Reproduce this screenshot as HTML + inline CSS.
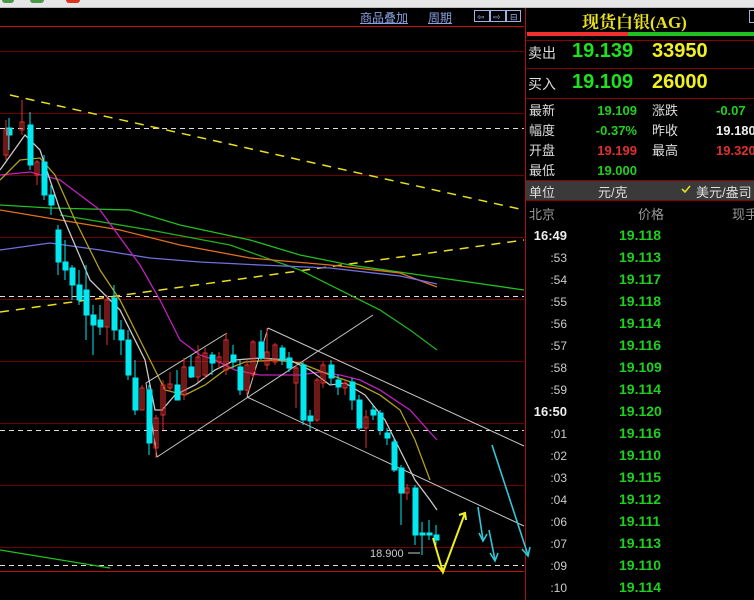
<!DOCTYPE html>
<html><head><meta charset="utf-8"><style>
body{margin:0;width:754px;height:600px;background:#000;overflow:hidden;position:relative;font-family:"Liberation Sans","Noto Sans CJK SC",sans-serif}
.t{position:absolute;white-space:nowrap}
</style></head><body>
<div style="position:absolute;left:0;top:0;width:754px;height:7px;background:#e6e6e6;border-bottom:1px solid #bbb"></div>
<div style="position:absolute;left:2px;top:0;width:12px;height:3px;background:#4a9a4a;border-radius:0 0 3px 3px"></div>
<div style="position:absolute;left:30px;top:0;width:14px;height:3px;background:#4a9a4a;border-radius:0 0 3px 3px"></div>
<div style="position:absolute;left:66px;top:0;width:14px;height:3px;background:#e03020;border-radius:0 0 3px 3px"></div>
<svg width="754" height="600" style="position:absolute;left:0;top:0" xmlns="http://www.w3.org/2000/svg">
<g stroke="#700000" stroke-width="1">
<line x1="0" y1="26.5" x2="524" y2="26.5" stroke="#c01010"/>
<line x1="0" y1="51.5" x2="524" y2="51.5"/><line x1="0" y1="113.5" x2="524" y2="113.5"/><line x1="0" y1="175.5" x2="524" y2="175.5"/><line x1="0" y1="237.5" x2="524" y2="237.5"/><line x1="0" y1="299.5" x2="524" y2="299.5"/><line x1="0" y1="361.5" x2="524" y2="361.5"/><line x1="0" y1="423.5" x2="524" y2="423.5"/><line x1="0" y1="485.5" x2="524" y2="485.5"/><line x1="0" y1="547.5" x2="524" y2="547.5"/><line x1="0" y1="571.5" x2="524" y2="571.5" stroke="#c01010"/>
</g>
<g stroke="#ddd" stroke-dasharray="5,4"><line x1="0" y1="128.5" x2="524" y2="128.5"/><line x1="0" y1="296.5" x2="524" y2="296.5"/><line x1="0" y1="430.5" x2="524" y2="430.5"/><line x1="0" y1="565.5" x2="524" y2="565.5"/></g>
<line x1="525.5" y1="8" x2="525.5" y2="600" stroke="#b01010"/>
<g stroke="#e8e020" stroke-width="1.5" stroke-dasharray="9,7"><line x1="10" y1="95" x2="524" y2="210"/><line x1="0" y1="312" x2="524" y2="240"/></g>
<g fill="none" stroke-width="1.3">
<polyline stroke="#20c020" points="0,205 50,208 130,210 180,225 250,240 300,255 350,265 420,275 524,290"/>
<polyline stroke="#20b020" points="60,215 150,230 230,245 300,270 340,290 380,310 410,330 437,350"/>
<polyline stroke="#e07020" points="0,210 60,220 120,230 180,245 250,258 330,265 400,273 437,287"/>
<polyline stroke="#7070e0" points="0,250 50,243 100,250 150,258 200,262 260,265 330,268 400,276 437,284"/>
<polyline stroke="#c020c0" points="0,175 30,172 60,180 100,210 140,265 160,300 180,340 200,355 215,360 235,370 260,375 300,375 320,372 340,375 360,380 380,390 410,410 437,440"/>
<polyline stroke="#b0a020" points="0,180 20,160 40,158 55,175 75,220 100,270 120,300 135,330 150,360 165,390 185,395 205,385 225,370 245,362 275,360 300,363 330,375 360,385 380,395 400,410 415,440 430,480"/>
<polyline stroke="#c8c8c8" points="0,170 25,135 40,150 60,210 90,280 120,310 145,360 155,410 162,410 175,395 195,385 215,370 235,360 260,358 290,360 310,370 330,385 345,383 365,395 385,420 400,450 415,480 430,500 437,510"/>
<polyline stroke="#20c020" points="0,550 110,568"/>
</g>
<g stroke="#c8c8c8" stroke-width="1" fill="none">
<polyline points="157,457 146,383 227,333"/><line x1="157" y1="457" x2="373" y2="315"/>
<polyline points="268,328 247,397"/><line x1="268" y1="328" x2="524" y2="446"/><line x1="247" y1="397" x2="524" y2="526"/>
</g>
<g stroke-width="1">
<g stroke="#00e8f0" fill="#00e8f0">
<line x1="9" y1="118" x2="9" y2="150"/><rect x="7" y="128" width="5" height="7"/>
<line x1="30" y1="112" x2="30" y2="170"/><rect x="28" y="125" width="5" height="40"/>
<line x1="44" y1="155" x2="44" y2="200"/><rect x="42" y="162" width="5" height="33"/>
<line x1="51" y1="185" x2="51" y2="215"/><rect x="49" y="195" width="5" height="10"/>
<line x1="58" y1="225" x2="58" y2="275"/><rect x="56" y="230" width="5" height="32"/>
<line x1="65" y1="240" x2="65" y2="280"/><rect x="63" y="262" width="5" height="8"/>
<line x1="72" y1="265" x2="72" y2="300"/><rect x="70" y="268" width="5" height="17"/>
<line x1="79" y1="270" x2="79" y2="305"/><rect x="77" y="285" width="5" height="15"/>
<line x1="86" y1="265" x2="86" y2="340"/><rect x="84" y="290" width="5" height="25"/>
<line x1="93" y1="305" x2="93" y2="355"/><rect x="91" y="315" width="5" height="10"/>
<line x1="100" y1="305" x2="100" y2="335"/><rect x="98" y="320" width="5" height="7"/>
<line x1="114" y1="285" x2="114" y2="340"/><rect x="112" y="298" width="5" height="32"/>
<line x1="121" y1="320" x2="121" y2="355"/><rect x="119" y="330" width="5" height="10"/>
<line x1="128" y1="330" x2="128" y2="380"/><rect x="126" y="340" width="5" height="35"/>
<line x1="135" y1="360" x2="135" y2="415"/><rect x="133" y="378" width="5" height="32"/>
<line x1="149" y1="385" x2="149" y2="455"/><rect x="147" y="390" width="5" height="53"/>
<line x1="177" y1="370" x2="177" y2="400"/><rect x="175" y="385" width="5" height="15"/>
<line x1="191" y1="355" x2="191" y2="378"/><rect x="189" y="367" width="5" height="10"/>
<line x1="212" y1="352" x2="212" y2="375"/><rect x="210" y="355" width="5" height="8"/>
<line x1="233" y1="345" x2="233" y2="368"/><rect x="231" y="355" width="5" height="7"/>
<line x1="240" y1="360" x2="240" y2="395"/><rect x="238" y="367" width="5" height="23"/>
<line x1="261" y1="330" x2="261" y2="360"/><rect x="259" y="342" width="5" height="16"/>
<line x1="282" y1="345" x2="282" y2="365"/><rect x="280" y="348" width="5" height="12"/>
<line x1="289" y1="352" x2="289" y2="372"/><rect x="287" y="358" width="5" height="10"/>
<line x1="303" y1="362" x2="303" y2="425"/><rect x="301" y="365" width="5" height="55"/>
<line x1="310" y1="410" x2="310" y2="430"/><rect x="308" y="416" width="5" height="5"/>
<line x1="331" y1="360" x2="331" y2="385"/><rect x="329" y="365" width="5" height="13"/>
<line x1="338" y1="375" x2="338" y2="395"/><rect x="336" y="380" width="5" height="7"/>
<line x1="352" y1="378" x2="352" y2="410"/><rect x="350" y="382" width="5" height="18"/>
<line x1="359" y1="395" x2="359" y2="430"/><rect x="357" y="400" width="5" height="28"/>
<line x1="373" y1="405" x2="373" y2="420"/><rect x="371" y="410" width="5" height="5"/>
<line x1="380" y1="410" x2="380" y2="435"/><rect x="378" y="413" width="5" height="17"/>
<line x1="387" y1="428" x2="387" y2="445"/><rect x="385" y="433" width="5" height="5"/>
<line x1="394" y1="438" x2="394" y2="472"/><rect x="392" y="442" width="5" height="28"/>
<line x1="401" y1="465" x2="401" y2="525"/><rect x="399" y="468" width="5" height="25"/>
<line x1="415" y1="485" x2="415" y2="545"/><rect x="413" y="488" width="5" height="47"/>
<line x1="422" y1="522" x2="422" y2="555"/><rect x="420" y="533" width="5" height="2"/>
<line x1="429" y1="520" x2="429" y2="540"/><rect x="427" y="533" width="5" height="2"/>
<line x1="436" y1="525" x2="436" y2="545"/><rect x="434" y="535" width="5" height="5"/>
</g>
<g stroke="#e03030" fill="none">
<line x1="6" y1="120" x2="6" y2="160"/><rect x="4" y="130" width="4" height="25"/>
<line x1="22" y1="100" x2="22" y2="135"/><rect x="20" y="122" width="4" height="8"/>
<line x1="37" y1="160" x2="37" y2="185"/><rect x="35" y="162" width="4" height="13"/>
<line x1="107" y1="295" x2="107" y2="345"/><rect x="105" y="300" width="4" height="27"/>
<line x1="142" y1="385" x2="142" y2="410"/><rect x="140" y="388" width="4" height="22"/>
<line x1="156" y1="415" x2="156" y2="458"/><rect x="154" y="418" width="4" height="30"/>
<line x1="163" y1="380" x2="163" y2="430"/><rect x="161" y="385" width="4" height="30"/>
<line x1="170" y1="372" x2="170" y2="392"/><rect x="168" y="384" width="4" height="4"/>
<line x1="184" y1="358" x2="184" y2="400"/><rect x="182" y="367" width="4" height="28"/>
<line x1="198" y1="345" x2="198" y2="382"/><rect x="196" y="357" width="4" height="20"/>
<line x1="205" y1="348" x2="205" y2="378"/><rect x="203" y="353" width="4" height="22"/>
<line x1="219" y1="352" x2="219" y2="368"/><rect x="217" y="357" width="4" height="5"/>
<line x1="226" y1="333" x2="226" y2="375"/><rect x="224" y="340" width="4" height="30"/>
<line x1="247" y1="360" x2="247" y2="395"/><rect x="245" y="365" width="4" height="25"/>
<line x1="253" y1="340" x2="253" y2="378"/><rect x="251" y="342" width="4" height="33"/>
<line x1="267" y1="328" x2="267" y2="370"/><rect x="265" y="352" width="4" height="13"/>
<line x1="275" y1="343" x2="275" y2="365"/><rect x="273" y="345" width="4" height="17"/>
<line x1="296" y1="365" x2="296" y2="408"/><rect x="294" y="368" width="4" height="15"/>
<line x1="317" y1="378" x2="317" y2="422"/><rect x="315" y="380" width="4" height="40"/>
<line x1="323" y1="362" x2="323" y2="388"/><rect x="321" y="365" width="4" height="18"/>
<line x1="345" y1="380" x2="345" y2="395"/><rect x="343" y="383" width="4" height="5"/>
<line x1="366" y1="410" x2="366" y2="448"/><rect x="364" y="417" width="4" height="11"/>
<line x1="407" y1="484" x2="407" y2="500"/><rect x="405" y="488" width="4" height="5"/>
</g>
</g>
<g fill="none" stroke-width="2">
<polyline stroke="#f0f020" points="433,538 443,572 465,513"/>
<polyline stroke="#f0f020" points="437,565 443,572 446,563"/>
<polyline stroke="#f0f020" points="459,515 465,513 466,520"/>
<g stroke="#30c8d8" stroke-width="1.6">
<polyline points="478,507 483,540"/><polyline points="479,533 483,541 487,534"/>
<polyline points="489,530 495,560"/><polyline points="490,553 495,561 498,553"/>
<polyline points="492,445 528,555"/><polyline points="522,549 528,556 530,547"/>
</g></g>
<text x="370" y="557" font-size="11" fill="#ccc" font-family="Liberation Sans">18.900</text>
<line x1="408" y1="553" x2="420" y2="553" stroke="#ccc"/>
<rect x="527" y="32" width="101" height="4" fill="#f03030"/><rect x="628" y="32" width="126" height="4" fill="#20c020"/>
<g stroke="#8a0000"><line x1="526" y1="40.5" x2="754" y2="40.5"/><line x1="526" y1="68.5" x2="754" y2="68.5"/><line x1="526" y1="98.5" x2="754" y2="98.5"/><line x1="526" y1="180.5" x2="754" y2="180.5"/><line x1="526" y1="200.5" x2="754" y2="200.5"/></g>
<rect x="526" y="181" width="228" height="19" fill="#3a3a3a"/>
<path d="M682 189 l3 3 l5 -6" stroke="#e0e020" stroke-width="1.6" fill="none"/>
<g stroke="#a0b0e0" fill="none"><rect x="474.5" y="10.5" width="15" height="11"/><rect x="490.5" y="10.5" width="15" height="11"/><rect x="506.5" y="10.5" width="14" height="11"/></g>
<g fill="#a0b0e0" font-size="9" font-family="DejaVu Sans"><text x="477" y="20">⇦</text><text x="493" y="20">⇨</text><text x="510" y="20">⊟</text></g>
<rect x="749.5" y="10.5" width="6" height="12" fill="none" stroke="#a0b0e0"/>
</svg>
<div class="t" style="left:360px;top:9px;font-size:12px;color:#8aa0e0;text-decoration:underline">商品叠加</div>
<div class="t" style="left:428px;top:9px;font-size:12px;color:#8aa0e0;text-decoration:underline">周期</div>
<div class="t" style="left:582px;top:8px;font-size:17px;font-weight:bold;color:#e8e020;font-family:'Liberation Serif','Noto Serif CJK SC',serif">现货白银(AG)</div>
<div class="t" style="left:528px;top:43px;font-size:14px;color:#ddd">卖出</div>
<div class="t" style="left:572px;top:40px;font-size:20px;font-weight:bold;color:#20e020">19.139</div>
<div class="t" style="left:652px;top:40px;font-size:20px;font-weight:bold;color:#f0f020">33950</div>
<div class="t" style="left:528px;top:74px;font-size:14px;color:#ddd">买入</div>
<div class="t" style="left:572px;top:71px;font-size:20px;font-weight:bold;color:#20e020">19.109</div>
<div class="t" style="left:652px;top:71px;font-size:20px;font-weight:bold;color:#f0f020">26000</div>
<div style="position:absolute;left:529px;top:101px;font-size:13px;line-height:20px;color:#ddd">最新<br>幅度<br>开盘<br>最低</div>
<div style="position:absolute;left:595px;top:101px;font-size:13px;line-height:20px;font-weight:bold;text-align:right;width:42px;color:#20d020">19.109<br>-0.37%<br><span style="color:#e03030">19.199</span><br>19.000</div>
<div style="position:absolute;left:652px;top:101px;font-size:13px;line-height:20px;color:#ddd">涨跌<br>昨收<br>最高</div>
<div style="position:absolute;left:716px;top:101px;font-size:13px;line-height:20px;font-weight:bold;color:#20d020">-0.07<br><span style="color:#eee">19.180</span><br><span style="color:#e03030">19.320</span></div>
<div class="t" style="left:529px;top:182px;font-size:13px;color:#ddd">单位</div>
<div class="t" style="left:598px;top:182px;font-size:13px;color:#ddd">元/克</div>
<div class="t" style="left:696px;top:182px;font-size:13px;color:#ddd">美元/盎司</div>
<div class="t" style="left:529px;top:204px;font-size:13px;color:#999">北京</div>
<div class="t" style="left:638px;top:204px;font-size:13px;color:#999">价格</div>
<div class="t" style="left:732px;top:204px;font-size:13px;color:#999">现手</div>
<div style="position:absolute;left:527px;top:225px;width:40px;font-size:12px;line-height:22px;color:#ccc;text-align:right">
<b style="font-size:13px;color:#eee">16:49</b><br>:53<br>:54<br>:55<br>:56<br>:57<br>:58<br>:59<br><b style="font-size:13px;color:#eee">16:50</b><br>:01<br>:02<br>:03<br>:04<br>:06<br>:07<br>:09<br>:10</div>
<div style="position:absolute;left:619px;top:224px;font-size:14px;line-height:22px;font-weight:bold;color:#20d020">19.118<br>19.113<br>19.117<br>19.118<br>19.114<br>19.116<br>19.109<br>19.114<br>19.120<br>19.116<br>19.110<br>19.115<br>19.112<br>19.111<br>19.113<br>19.110<br>19.114</div>
</body></html>
